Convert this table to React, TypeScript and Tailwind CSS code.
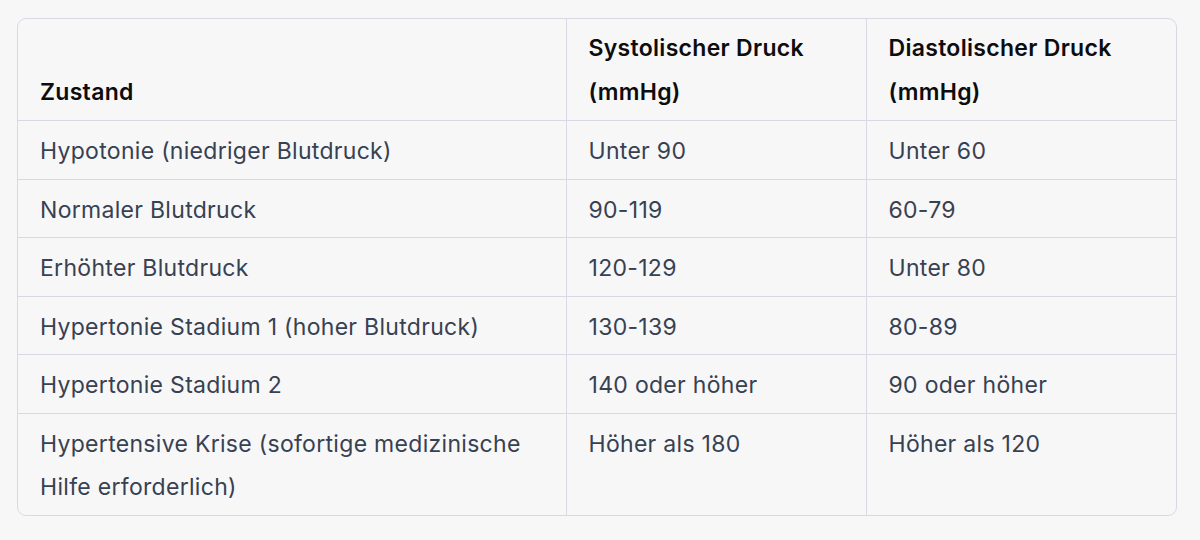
import React from "react";

const rows: [string, string, string][] = [
  ["Hypotonie (niedriger Blutdruck)", "Unter 90", "Unter 60"],
  ["Normaler Blutdruck", "90-119", "60-79"],
  ["Erhöhter Blutdruck", "120-129", "Unter 80"],
  ["Hypertonie Stadium 1 (hoher Blutdruck)", "130-139", "80-89"],
  ["Hypertonie Stadium 2", "140 oder höher", "90 oder höher"],
  ["Hypertensive Krise (sofortige medizinische Hilfe erforderlich)", "Höher als 180", "Höher als 120"],
];

export default function App() {
  return (
    <div
      className="min-h-[540px] w-[1200px] bg-[#f7f7f8] pt-[18px] pl-[17px]"
      style={{ fontFamily: "Inter, 'Noto Sans', sans-serif" }}
    >
      <div className="w-[1160px] overflow-hidden rounded-[9px] border border-[#d9d9e3]">
        <table className="w-full table-fixed border-collapse text-[23px] leading-[43.5px] tracking-[0.3px]">
          <colgroup>
            <col className="w-[548px]" />
            <col className="w-[300px]" />
            <col />
          </colgroup>
          <thead>
            <tr>
              <th className="px-[22px] pt-[8px] pb-[6px] text-left align-bottom font-semibold text-[#0d0d0d]">
                Zustand
              </th>
              <th className="border-l border-[#d9d9e3] px-[22px] pt-[8px] pb-[6px] text-left align-bottom font-semibold text-[#0d0d0d]">
                Systolischer Druck (mmHg)
              </th>
              <th className="border-l border-[#d9d9e3] px-[22px] pt-[8px] pb-[6px] text-left align-bottom font-semibold text-[#0d0d0d]">
                Diastolischer Druck (mmHg)
              </th>
            </tr>
          </thead>
          <tbody className="text-[#374151]">
            {rows.map(([a, b, c]) => (
              <tr key={a} className="border-t border-[#d9d9e3]">
                <td className="px-[22px] pt-[9px] pb-[5px] align-top">{a}</td>
                <td className="border-l border-[#d9d9e3] px-[22px] pt-[9px] pb-[5px] align-top">{b}</td>
                <td className="border-l border-[#d9d9e3] px-[22px] pt-[9px] pb-[5px] align-top">{c}</td>
              </tr>
            ))}
          </tbody>
        </table>
      </div>
    </div>
  );
}
